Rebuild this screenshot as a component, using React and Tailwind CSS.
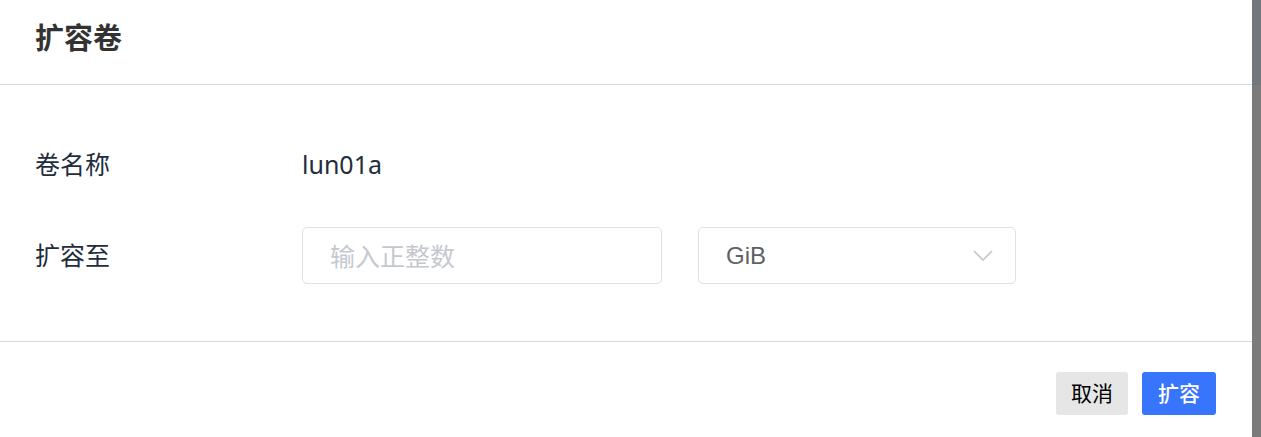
import React from 'react';

const ExpandVolumeDialog = () => {
  return (
    <div className="flex h-[437px] w-full bg-white font-['Noto_Sans','Noto_Sans_CJK_SC',sans-serif]">
      <div className="flex flex-1 flex-col">
        <div className="h-[85px] border-b border-[#d0d8e2] pl-[35px] pt-[17px]">
          <h2 className="text-[29px] font-bold leading-[42px] text-[#333]">扩容卷</h2>
        </div>

        <div className="flex flex-col gap-[34px] border-b border-[#d0d8e2] pb-[57px] pl-[35px] pt-[51px]">
          <div className="flex h-[57px] items-center text-[25px] text-[#1f2d3d]">
            <span className="w-[267px]">卷名称</span>
            <span>lun01a</span>
          </div>
          <div className="flex h-[57px] items-center text-[25px] text-[#1f2d3d]">
            <span className="w-[267px]">扩容至</span>
            <input
              type="text"
              placeholder="输入正整数"
              className="h-[57px] w-[360px] rounded-[5px] border border-[#dfe1e8] pl-[27px] text-[25px] text-[#1f2d3d] outline-none placeholder:text-[#c5c8d0]"
            />
            <div className="ml-[36px] flex h-[57px] w-[318px] items-center justify-between rounded-[5px] border border-[#dfe1e8] pl-[27px] pr-[22px]">
              <span className="font-['Liberation_Sans',sans-serif] text-[24px] text-[#5f6167]">GiB</span>
              <svg width="20" height="11" viewBox="0 0 20 11" fill="none">
                <path d="M1 1l9 9 9-9" stroke="#c2c5cc" strokeWidth="1.6" />
              </svg>
            </div>
          </div>
        </div>

        <div className="flex justify-end gap-[14px] pr-[36px] pt-[30px]">
          <button className="h-[43px] w-[72px] rounded-[3px] bg-[#e6e6e6] text-[21px] text-black">取消</button>
          <button className="h-[43px] w-[74px] rounded-[3px] bg-[#3875fd] text-[21px] font-medium text-white">扩容</button>
        </div>
      </div>
      <div className="flex w-[9px] flex-col">
        <div className="h-[85px] bg-[#72777d]" />
        <div className="flex-1 bg-[#7b7b7b]" />
      </div>
    </div>
  );
};

export default function App() {
  return <ExpandVolumeDialog />;
}
